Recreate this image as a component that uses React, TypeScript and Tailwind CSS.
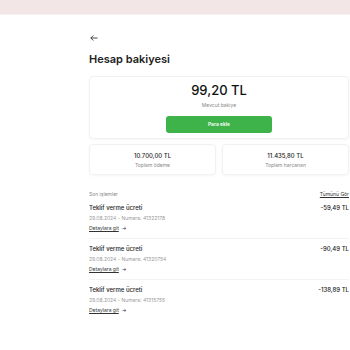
import React from "react";

const items = [
  { no: "41322178", amt: "-59,49 TL" },
  { no: "41320754", amt: "-90,49 TL" },
  { no: "41315755", amt: "-138,89 TL" },
];

export default function App() {
  return (
    <div className="w-[350px] h-[350px] bg-white overflow-hidden" style={{ fontFamily: "Inter, 'Noto Sans', sans-serif" }}>
      <div className="h-[15px] bg-[#f2e6e7] border-b border-[#f9f1f1]" />
      <div className="ml-[89px] w-[260px] pt-[19px]">
        <div className="h-[8px] flex items-center pl-[1px]">
          <svg width="8" height="6" viewBox="0 0 8 6" fill="none" stroke="#333" strokeWidth="0.9">
            <path d="M7.5 3H0.8M3.3 0.5L0.8 3l2.5 2.5" />
          </svg>
        </div>
        <div className="mt-[10px] text-[11px] leading-[14px] font-semibold text-[#222]">Hesap bakiyesi</div>
        <div className="mt-[10px] rounded-[4px] border border-[#f1f1f1] shadow-[0_1px_3px_rgba(0,0,0,0.04)] flex flex-col items-center pt-[5px] pb-[5px]">
          <div className="text-[13px] leading-[17px] font-medium text-[#111]">99,20 TL</div>
          <div className="mt-[3px] text-[5px] leading-[6px] text-[#888]">Mevcut bakiye</div>
          <div className="mt-[8px] w-[106px] h-[17px] rounded-[3px] bg-[#3db34a] flex items-center justify-center text-white text-[5px] font-semibold">Para ekle</div>
        </div>
        <div className="mt-[5px] flex gap-[6px]">
          <div className="flex-1 h-[31px] rounded-[4px] border border-[#f1f1f1] shadow-[0_1px_3px_rgba(0,0,0,0.04)] flex flex-col items-center justify-center">
            <div className="text-[6px] leading-[8px] font-medium text-[#222]">10.700,00 TL</div>
            <div className="mt-[2px] text-[5px] leading-[6px] text-[#888]">Toplam ödeme</div>
          </div>
          <div className="flex-1 h-[31px] rounded-[4px] border border-[#f1f1f1] shadow-[0_1px_3px_rgba(0,0,0,0.04)] flex flex-col items-center justify-center">
            <div className="text-[6px] leading-[8px] font-medium text-[#222]">11.435,80 TL</div>
            <div className="mt-[2px] text-[5px] leading-[6px] text-[#888]">Toplam harcanan</div>
          </div>
        </div>
        <div className="mt-[16px] flex justify-between items-center">
          <div className="text-[5px] leading-[7px] text-[#888]">Son işlemler</div>
          <div className="text-[5px] leading-[7px] text-[#333] underline">Tümünü Gör</div>
        </div>
        <div className="flex flex-col">
          {items.map((it, i) => (
            <div key={i} className={`pt-[6px] pb-[6px] ${i < 2 ? "border-b border-[#f3f3f3]" : ""}`}>
              <div className="flex justify-between items-center">
                <div className="text-[6px] leading-[8px] font-medium text-[#222]">Teklif verme ücreti</div>
                <div className="text-[6px] leading-[8px] font-medium text-[#222]">{it.amt}</div>
              </div>
              <div className="mt-[3px] text-[5px] leading-[6px] text-[#999]">29.08.2024 - Numara: {it.no}</div>
              <div className="mt-[4px] flex items-center gap-[3px] text-[5px] leading-[7px] text-[#333]">
                <span className="underline">Detaylara git</span>
                <span>→</span>
              </div>
            </div>
          ))}
        </div>
      </div>
    </div>
  );
}
